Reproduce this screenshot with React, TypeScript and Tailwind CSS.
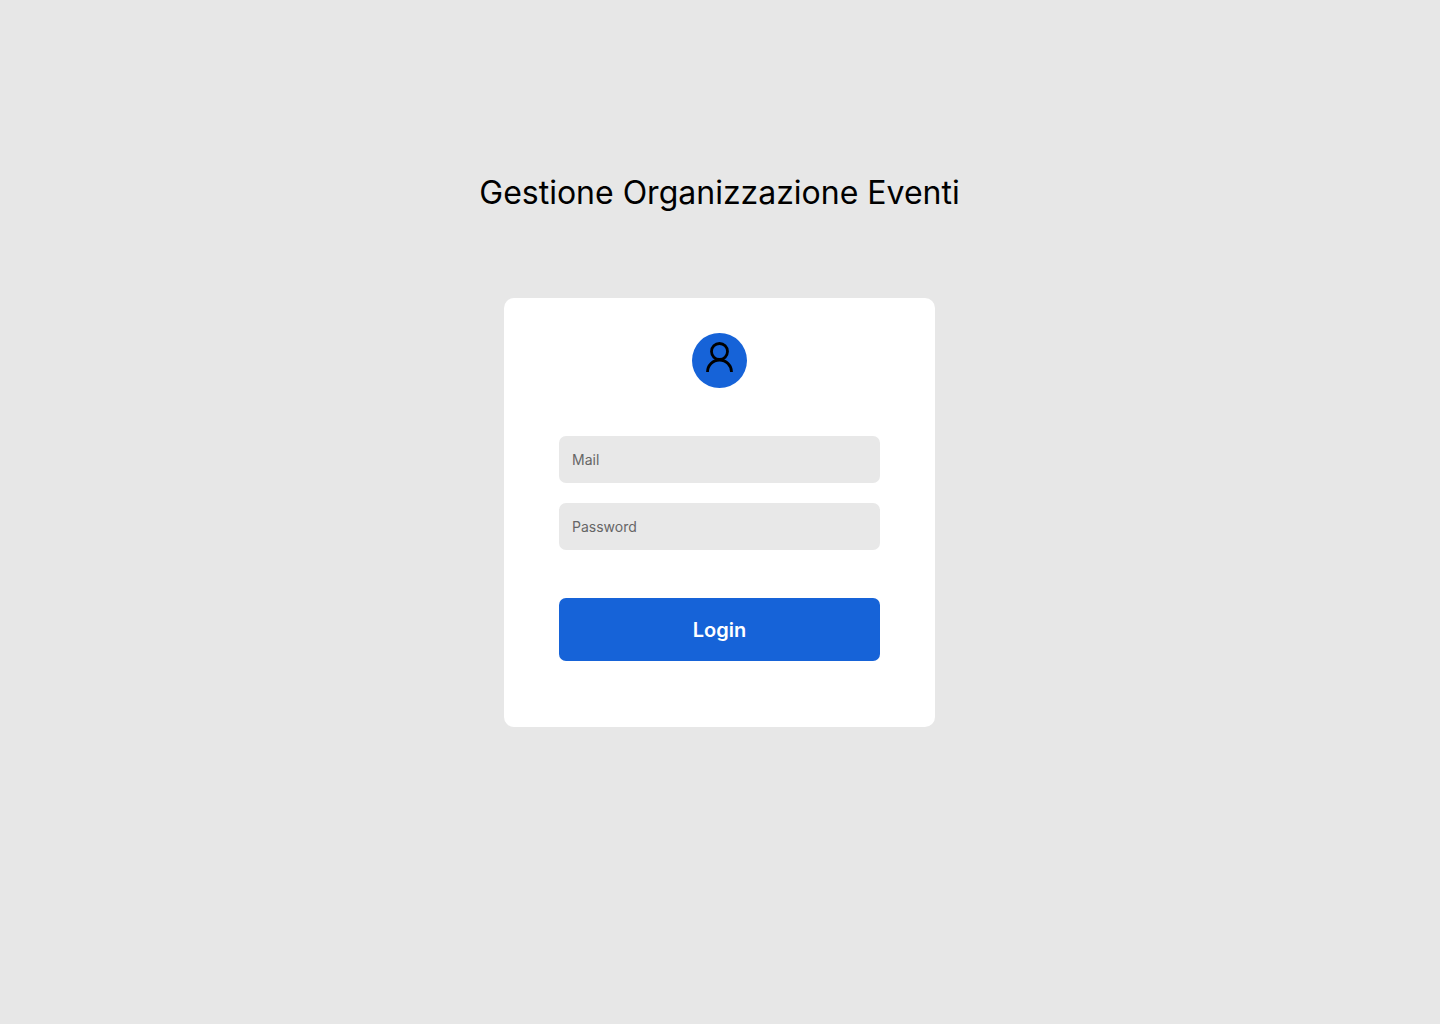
export default function App() {
  return (
    <main className="flex min-h-screen flex-col items-center bg-[#e7e7e7] pt-[172px] pr-[17px] pb-12 pl-4 font-['Inter',sans-serif]">
      <h1 className="text-center text-[32px] leading-[42px] text-black">Gestione Organizzazione Eventi</h1>
      <form
        className="mt-[84px] flex w-full max-w-[431px] flex-col items-center rounded-[10px] bg-white px-[55px] pt-[35px] pb-[66px]"
        onSubmit={(event) => event.preventDefault()}
      >
        <svg className="size-[55px]" viewBox="0 0 55 55" fill="none" aria-hidden="true">
          <circle cx="27.5" cy="27.5" r="27.5" fill="#1663d8" />
          <circle cx="27.5" cy="18.5" r="8" stroke="#000" strokeWidth="2.8" />
          <path d="M15.5 39a12 12 0 0 1 24 0" stroke="#000" strokeWidth="2.8" />
        </svg>
        <div className="mt-12 flex w-full flex-col gap-5">
          <input
            type="email"
            aria-label="Mail"
            placeholder="Mail"
            className="h-[47px] w-full rounded-[7px] bg-[#e8e8e8] px-[13px] text-sm text-black placeholder:text-[#666666]"
          />
          <input
            type="password"
            aria-label="Password"
            placeholder="Password"
            className="h-[47px] w-full rounded-[7px] bg-[#e8e8e8] px-[13px] text-sm text-black placeholder:text-[#666666]"
          />
        </div>
        <button type="submit" className="mt-12 h-[63px] w-full rounded-[7px] bg-[#1663d8] text-xl font-semibold text-white">
          Login
        </button>
      </form>
    </main>
  );
}
